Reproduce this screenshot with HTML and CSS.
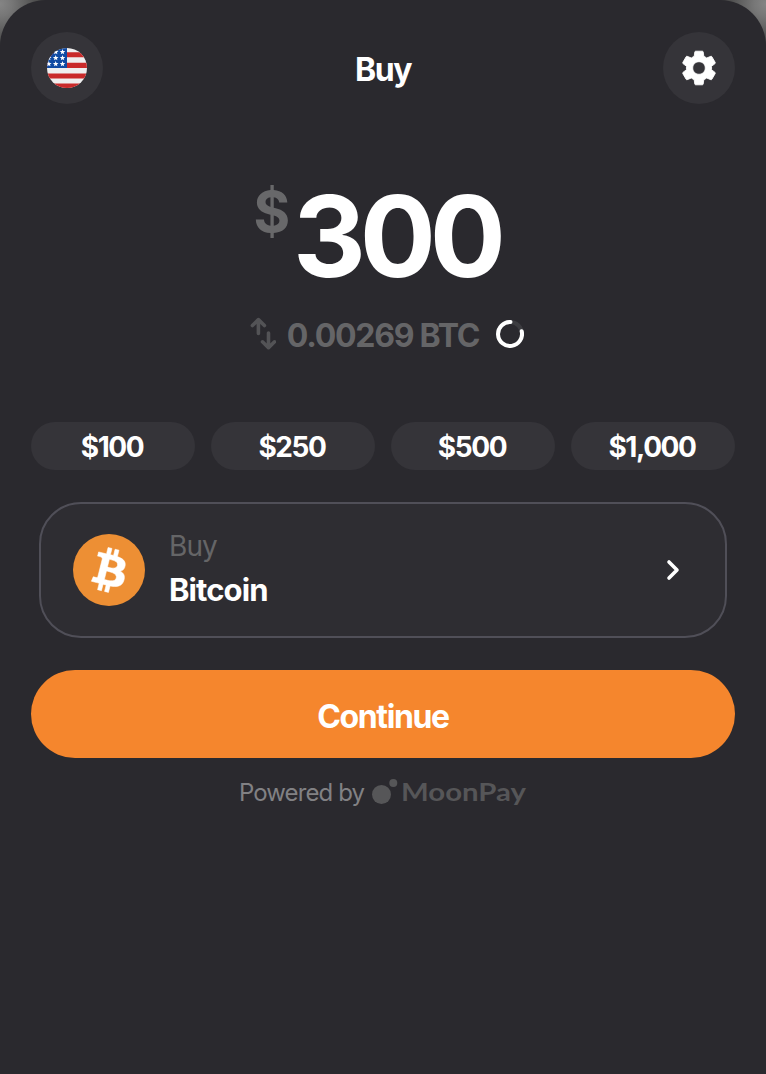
FILE: index.html
```html
<!DOCTYPE html>
<html lang="en">
<head>
<meta charset="utf-8">
<title>Buy</title>
<link rel="stylesheet" href="styles.css">
</head>
<body>
<main class="sheet">
  <header class="header">
    <button class="round" aria-label="Region">
      <svg width="40" height="40" viewBox="0 0 40 40">
        <defs>
          <clipPath id="disc"><circle cx="20" cy="20" r="20"/></clipPath>
          <path id="star" d="M0-2.9.75-.95 2.800-.9 1.15.4 1.75 2.350 0 1.200-1.75 2.350-1.15.4-2.800-.9-.75-.95z"/>
        </defs>
        <g clip-path="url(#disc)">
          <rect width="40" height="40" fill="#efefef"/>
          <path fill="#c92a2a" d="M0 4.3h40v5H0zM0 14.8h40V20H0zM0 25.4h40v5H0zM0 35.6h40V40H0z"/>
          <rect width="20" height="20" fill="#0f4aa3"/>
          <g fill="#fff">
            <use href="#star" x="8.7" y="4"/><use href="#star" x="15.5" y="4"/>
            <use href="#star" x="1.8" y="10"/><use href="#star" x="8.7" y="10"/><use href="#star" x="15.5" y="10"/>
            <use href="#star" x="1.8" y="16"/><use href="#star" x="8.7" y="16"/><use href="#star" x="15.5" y="16"/>
          </g>
        </g>
      </svg>
    </button>
    <h1 class="title">Buy</h1>
    <button class="round" aria-label="Settings">
      <svg width="42" height="42" viewBox="0 0 24 24" fill="#fff"><path stroke="#fff" stroke-width=".5" stroke-linejoin="round" d="M19.14 12.94c.04-.3.06-.61.06-.94 0-.32-.02-.64-.07-.94l2.03-1.58c.18-.14.23-.41.12-.61l-1.92-3.32c-.12-.22-.37-.29-.59-.22l-2.39.96c-.5-.38-1.03-.7-1.62-.94l-.36-2.54c-.04-.24-.24-.41-.48-.41h-3.84c-.24 0-.43.17-.47.41l-.36 2.54c-.59.24-1.13.57-1.62.94l-2.39-.96c-.22-.08-.47 0-.59.22L2.74 8.87c-.12.21-.08.47.12.61l2.03 1.58c-.05.3-.09.63-.09.94s.02.64.07.94l-2.03 1.58c-.18.14-.23.41-.12.61l1.92 3.32c.12.22.37.29.59.22l2.39-.96c.5.38 1.03.7 1.62.94l.36 2.54c.05.24.24.41.48.41h3.84c.24 0 .44-.17.47-.41l.36-2.54c.59-.24 1.13-.56 1.62-.94l2.39.96c.22.08.47 0 .59-.22l1.92-3.32c.12-.22.07-.47-.12-.61l-2.01-1.58zM12 15.6c-1.98 0-3.6-1.62-3.6-3.6s1.62-3.6 3.6-3.6 3.6 1.62 3.6 3.6-1.62 3.6-3.6 3.6z"/></svg>
    </button>
  </header>

  <section class="amount">
    <span class="currency">$</span><span class="value">300</span>
  </section>

  <section class="quote">
    <svg class="swap" width="26" height="34" viewBox="0 0 26 34" fill="none" stroke="#535356" stroke-width="3.6" stroke-linecap="round" stroke-linejoin="round"><path d="M8.4 16.5V3M2.4 8.5 8.4 2.6l6 5.9M18.5 16v13.500M12.500 24.800l6 5.900 6-5.900"/></svg>
    <span class="crypto">0.00269 BTC</span>
    <svg class="spinner" width="28" height="28" viewBox="0 0 28 28" fill="none" stroke-width="4"><circle cx="14" cy="14" r="12" stroke="#3c3c40"/><path stroke="#fff" stroke-linecap="round" d="M14.500 2A12 12 0 1 0 25.700 11.200"/></svg>
  </section>

  <nav class="presets">
    <button class="chip">$100</button>
    <button class="chip">$250</button>
    <button class="chip">$500</button>
    <button class="chip">$1,000</button>
  </nav>

  <section class="asset">
    <svg width="72" height="72" viewBox="0 0 32 32"><circle cx="16" cy="16" r="16" fill="#ed8f34"/><path fill="#fff" stroke="#fff" stroke-width=".25" d="M23.189 14.02c.314-2.096-1.283-3.223-3.465-3.975l.708-2.84-1.728-.43-.69 2.765c-.454-.114-.92-.22-1.385-.326l.695-2.783L15.596 6l-.708 2.839c-.376-.086-.746-.17-1.104-.26l.002-.009-2.384-.595-.46 1.846s1.283.294 1.256.312c.7.175.826.638.805 1.006l-.806 3.235c.048.012.11.03.18.057l-.183-.045-1.13 4.532c-.086.212-.303.531-.793.41.018.025-1.256-.313-1.256-.313l-.858 1.978 2.25.561c.418.105.828.215 1.231.318l-.715 2.872 1.727.43.708-2.84c.472.127.93.245 1.378.357l-.706 2.828 1.728.43.715-2.866c2.948.558 5.164.333 6.097-2.333.752-2.146-.037-3.385-1.588-4.192 1.13-.26 1.98-1.003 2.207-2.538zm-3.95 5.538c-.533 2.147-4.148.986-5.32.695l.95-3.805c1.172.293 4.929.872 4.37 3.11zm.535-5.569c-.487 1.953-3.495.96-4.47.717l.86-3.45c.975.243 4.118.696 3.61 2.733z"/></svg>
    <div class="asset-text">
      <span class="asset-label">Buy</span>
      <span class="asset-name">Bitcoin</span>
    </div>
    <svg width="14" height="22" viewBox="0 0 14 22" fill="none" stroke="#fff" stroke-width="3.600" stroke-linecap="round" stroke-linejoin="round"><path d="M3 3l8 8-8 8"/></svg>
  </section>

  <button class="continue">Continue</button>

  <footer class="footer">
    <span class="powered">Powered by</span>
    <svg width="26" height="26" viewBox="0 0 26 26" fill="#565658"><circle cx="9.500" cy="15.500" r="9.500"/><circle cx="21.300" cy="4" r="4"/></svg>
    <svg class="brand" width="126" height="32" viewBox="0 0 126 32"><text x="0" y="25" textLength="125" lengthAdjust="spacingAndGlyphs">MoonPay</text></svg>
  </footer>
</main>
</body>
</html>
```
FILE: styles.css
```css
* { box-sizing: border-box; }
body {
  margin: 0;
  background:
    radial-gradient(circle at 0 4px, #858585 0, #777 12px, #444 42px, transparent 44px),
    radial-gradient(circle at 100% 4px, #858585 0, #777 12px, #444 42px, transparent 44px),
    #444;
  font-family: Inter, "Liberation Sans", sans-serif;
  font-weight: 650;
  color: #fff;
}
button {
  border: 0;
  padding: 0;
  color: inherit;
  font: inherit;
}
svg { display: block; flex: none; }
.sheet {
  height: 1074px;
  padding: 32px 31px 0;
  border-radius: 46px 46px 0 0;
  background: #2a292e;
  overflow: hidden;
}
.header {
  display: flex;
  justify-content: space-between;
  align-items: center;
}
.round {
  display: grid;
  place-items: center;
  width: 72px;
  height: 72px;
  border-radius: 50%;
  background: #353439;
}
.title {
  margin: 4px 0 0;
  font-size: 32px;
  line-height: 40px;
  font-weight: 650;
  letter-spacing: -1.5px;
}
.amount {
  display: flex;
  justify-content: center;
  align-items: flex-start;
  height: 112px;
  margin-top: 76px;
  padding-right: 13px;
  gap: 3px;
}
.currency {
  margin-top: 4px;
  font-size: 56px;
  line-height: 56px;
  color: #68686a;
}
.value {
  font-size: 113px;
  line-height: 112px;
  letter-spacing: -6.3px;
}
.quote {
  display: flex;
  justify-content: center;
  align-items: center;
  height: 40px;
  margin-top: 24px;
  padding-left: 8px;
}
.swap { margin-top: -4px; }
.spinner { margin-top: -4px; }
.crypto {
  margin: 0 17px 0 11px;
  font-size: 32px;
  line-height: 40px;
  letter-spacing: -1.25px;
  color: #656567;
}
.presets {
  display: grid;
  grid-template-columns: repeat(4, 1fr);
  gap: 16px;
  margin-top: 66px;
}
.chip {
  height: 48px;
  padding: 2px 2px 0 0;
  border-radius: 24px;
  background: #353439;
  font-size: 28px;
  letter-spacing: -1.4px;
}
.asset {
  display: flex;
  align-items: center;
  height: 136px;
  margin: 32px 8px 0;
  padding: 0 45px 0 32px;
  border: 2px solid #504f58;
  border-radius: 42px;
  background: #2e2d32;
}
.asset-text {
  display: flex;
  flex: 1;
  flex-direction: column;
  margin: -5px 0 0 24px;
}
.asset-label {
  font-size: 28px;
  line-height: 44px;
  font-weight: 400;
  letter-spacing: -0.9px;
  color: #656567;
}
.asset-name {
  font-size: 31px;
  line-height: 44px;
  letter-spacing: -0.9px;
}
.continue {
  display: block;
  width: 100%;
  height: 88px;
  margin-top: 32px;
  padding-top: 4px;
  border-radius: 44px;
  background: #f5862d;
  font-size: 32px;
  letter-spacing: -1.4px;
}
.footer {
  display: flex;
  justify-content: center;
  align-items: center;
  height: 32px;
  margin-top: 18px;
}
.powered {
  margin-right: 8px;
  font-size: 24px;
  font-weight: 400;
  letter-spacing: -0.9px;
  color: #818184;
}
.brand {
  margin-left: 3px;
  font: 700 25px Lato, sans-serif;
  fill: #565658;
}
```
